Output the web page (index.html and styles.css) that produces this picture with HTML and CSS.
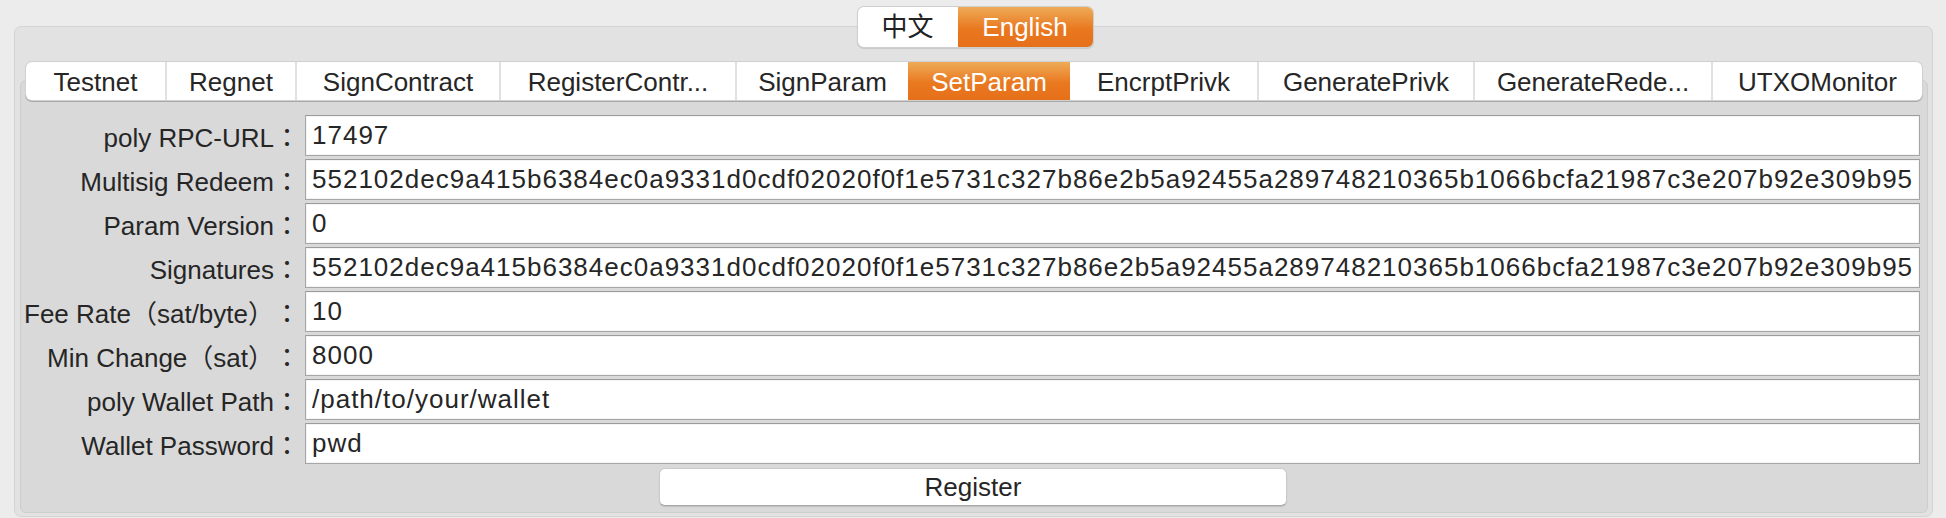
FILE: index.html
```html
<!DOCTYPE html>
<html lang="en">
<head>
<meta charset="utf-8">
<title>SetParam</title>
<link rel="stylesheet" href="styles.css">
</head>
<body>
<div class="window">
  <div class="group">
    <div class="lang-wrap">
      <div class="lang">
        <span class="seg">中文</span>
        <span class="seg seg-on">English</span>
      </div>
    </div>
    <div class="tabs">
      <span class="tab">Testnet</span>
      <span class="tab">Regnet</span>
      <span class="tab">SignContract</span>
      <span class="tab">RegisterContr...</span>
      <span class="tab">SignParam</span>
      <span class="tab tab-on">SetParam</span>
      <span class="tab">EncrptPrivk</span>
      <span class="tab">GeneratePrivk</span>
      <span class="tab">GenerateRede...</span>
      <span class="tab">UTXOMonitor</span>
    </div>
    <div class="pane">
      <div class="form">
        <label class="label">poly RPC-URL：</label>
        <input class="field" type="text" value="17497">
        <label class="label">Multisig Redeem：</label>
        <input class="field" type="text" value="552102dec9a415b6384ec0a9331d0cdf02020f0f1e5731c327b86e2b5a92455a289748210365b1066bcfa21987c3e207b92e309b95">
        <label class="label">Param Version：</label>
        <input class="field" type="text" value="0">
        <label class="label">Signatures：</label>
        <input class="field" type="text" value="552102dec9a415b6384ec0a9331d0cdf02020f0f1e5731c327b86e2b5a92455a289748210365b1066bcfa21987c3e207b92e309b95">
        <label class="label">Fee Rate（sat/byte）：</label>
        <input class="field" type="text" value="10">
        <label class="label">Min Change（sat）：</label>
        <input class="field" type="text" value="8000">
        <label class="label">poly Wallet Path：</label>
        <input class="field" type="text" value="/path/to/your/wallet">
        <label class="label">Wallet Password：</label>
        <input class="field" type="text" value="pwd">
      </div>
      <div class="actions">
        <button class="btn" type="button">Register</button>
      </div>
    </div>
  </div>
</div>
</body>
</html>
```
FILE: styles.css
```css
* { box-sizing: border-box; }

html, body {
  margin: 0;
  padding: 0;
  background: #ececec;
  height: 100%;
  overflow: hidden;
}

body {
  font-family: "Liberation Sans", "Noto Sans CJK TC", sans-serif;
  font-size: 26px;
  color: #262626;
  text-spacing-trim: space-all;
}

.window {
  padding: 26px 13px 0 14px;
}

.group {
  position: relative;
  background: #e2e2e2;
  border: 1px solid #d4d4d4;
  border-radius: 7px;
  padding: 35px 4px 3px 5px;
}

.lang-wrap {
  position: absolute;
  top: -20px;
  left: 0;
  right: 0;
  display: flex;
  justify-content: center;
  padding-left: 3px;
}

.lang {
  display: flex;
  height: 40px;
  border-radius: 6px;
  box-shadow: 0 0 0 1px #cfcfcf, 0 1px 1px 1px rgba(0, 0, 0, 0.12);
  overflow: hidden;
}

.seg {
  display: flex;
  align-items: center;
  justify-content: center;
  background: #ffffff;
  color: #222;
  width: 100px;
  line-height: 1;
}

.seg-on {
  width: 135px;
  color: #ffffff;
  background: linear-gradient(#eeab58, #e9781f 55%, #e6701a);
}

.tabs {
  position: relative;
  z-index: 1;
  display: grid;
  grid-template-columns: 139px 130px 204px 236px 173px 162px 187px 216px 238px 211px;
  height: 38px;
  margin: 0 6px -20px 6px;
  background: #ffffff;
  border-radius: 6px;
  box-shadow: 0 0 0 1px #d0d0d0, 0 1px 0 1px #a9a9a9;
  overflow: hidden;
}

.tab {
  display: flex;
  align-items: center;
  justify-content: center;
  white-space: nowrap;
  line-height: 1;
  padding-top: 1px;
  border-left: 2px solid #e1e1e1;
}

.tab:first-child {
  border-left: 0;
}

.tab-on {
  color: #ffffff;
  border-left: 0;
  background: linear-gradient(#eeab58, #e9781f 55%, #e6701a);
}

.tab-on + .tab {
  border-left: 0;
}

.pane {
  background: #d9d9d9;
  border: 1px solid #cdcdcd;
  border-radius: 6px;
  padding: 34px 7px 6px 5px;
}

.form {
  display: grid;
  grid-template-columns: 274px 1fr;
  grid-auto-rows: 41px;
  column-gap: 5px;
  row-gap: 3px;
}

.label {
  display: flex;
  align-items: center;
  justify-content: flex-end;
  white-space: nowrap;
  color: #262626;
}

.field {
  display: block;
  width: 100%;
  height: 41px;
  margin: 0;
  padding: 0 6px;
  font-family: "Liberation Sans", sans-serif;
  font-size: 26px;
  letter-spacing: 1px;
  color: #262626;
  background: #ffffff;
  border: 1px solid #a6a6a6;
  border-top-color: #9c9c9c;
  box-shadow: inset 0 0 0 1px #f4f4f4;
  border-radius: 0;
  outline: none;
}

.actions {
  display: flex;
  justify-content: center;
  margin-top: 4px;
}

.btn {
  width: 628px;
  height: 38px;
  margin: 0;
  padding: 0;
  font-family: "Liberation Sans", sans-serif;
  font-size: 26px;
  color: #262626;
  background: #ffffff;
  border: 1px solid #cacaca;
  border-bottom-color: #a8a8a8;
  border-radius: 6px;
  box-shadow: 0 1px 1px rgba(0, 0, 0, 0.12);
  line-height: 1;
}
```
